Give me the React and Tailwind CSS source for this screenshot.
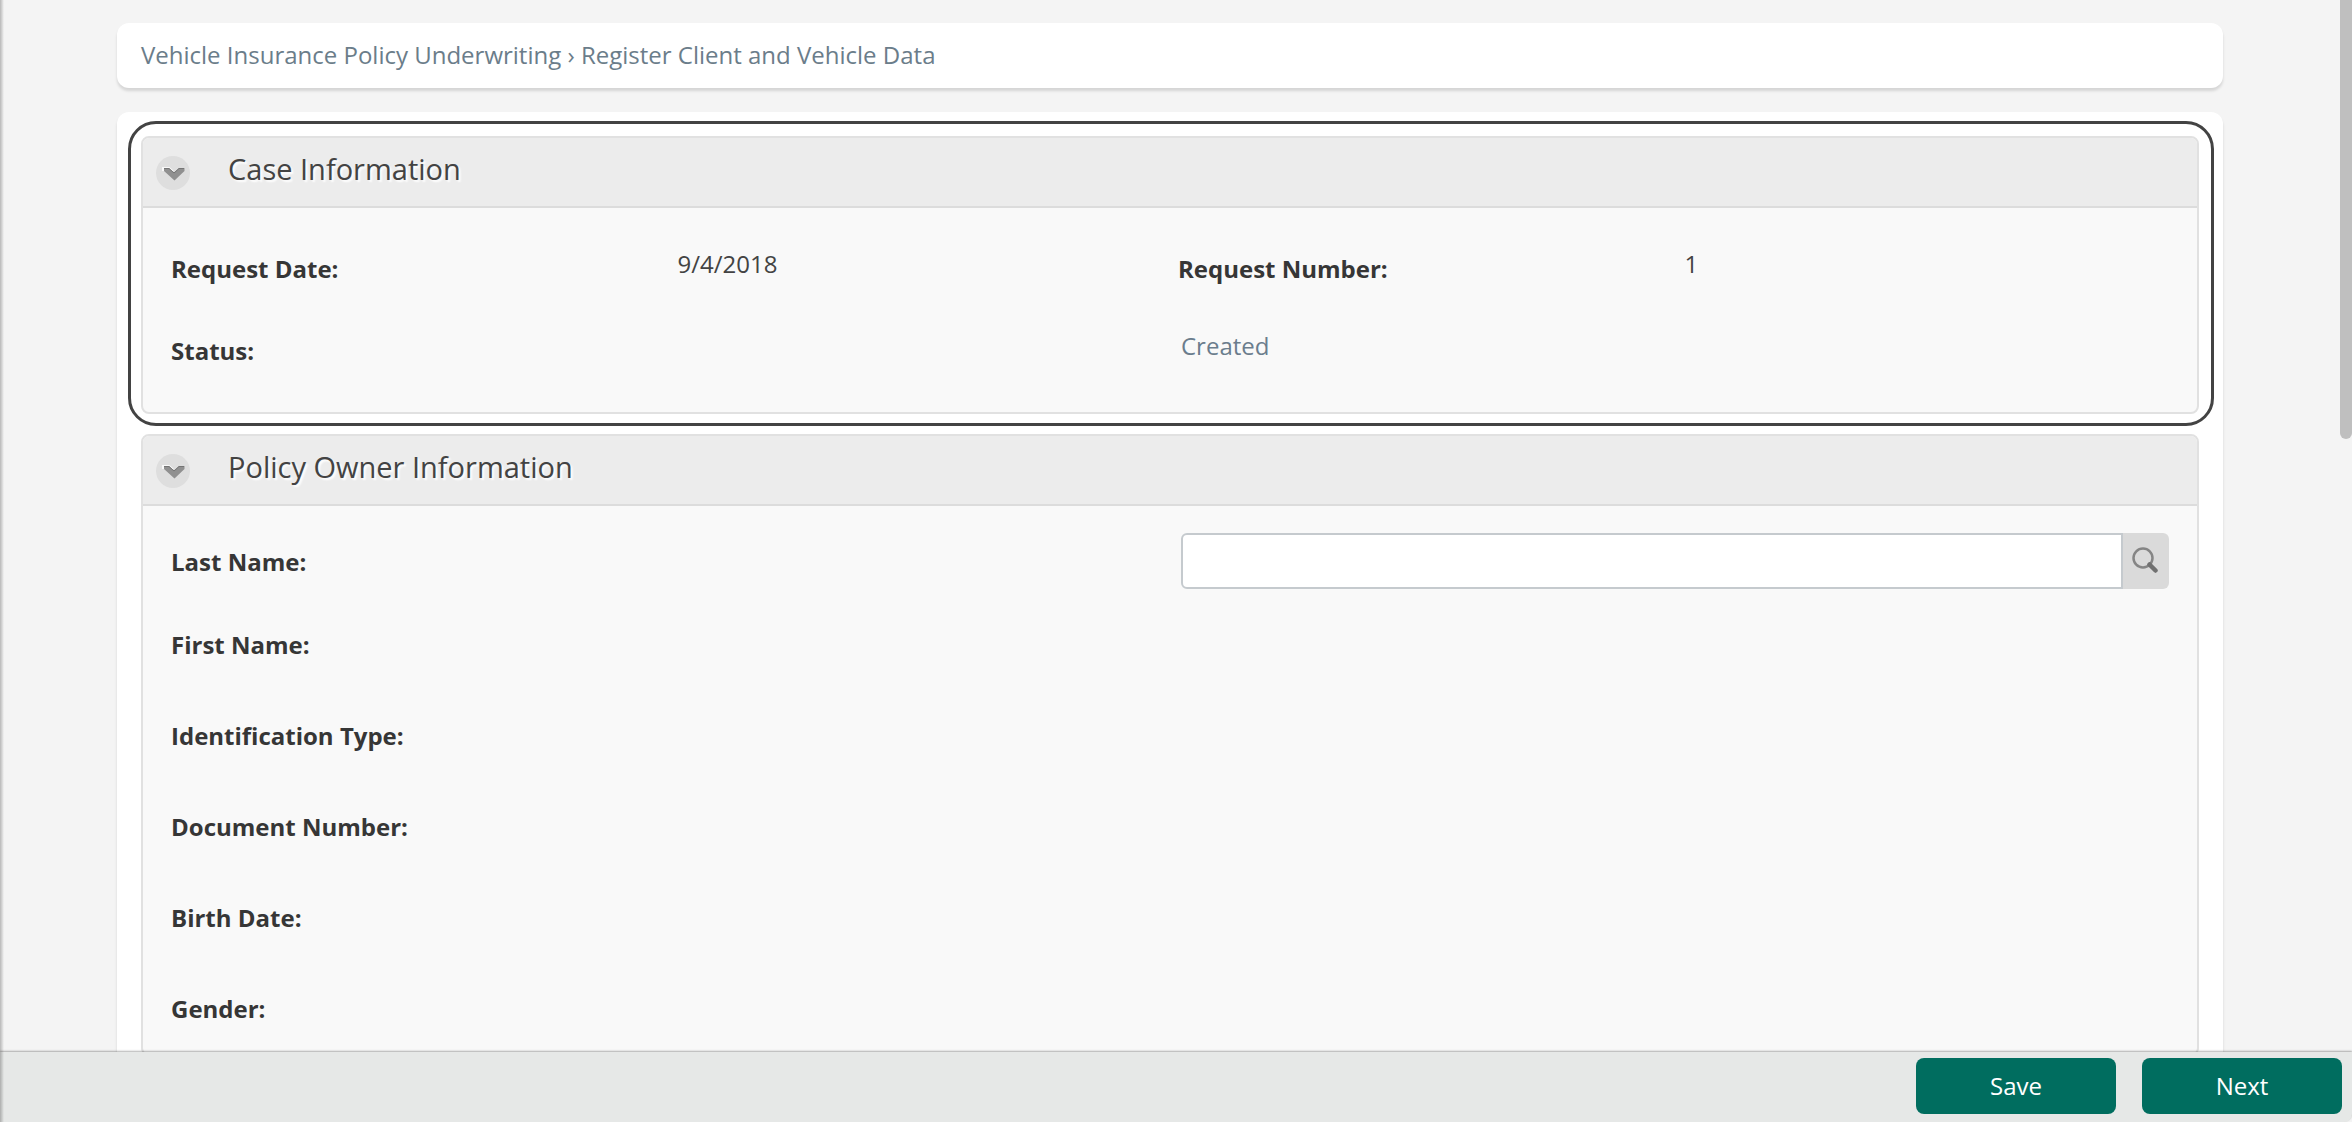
import React, { useState } from 'react';

const ownerFields = ['First Name:', 'Identification Type:', 'Document Number:', 'Birth Date:', 'Gender:'];

function ChevronIcon() {
  return (
    <svg className="w-[34px] h-[34px]" viewBox="0 0 34 34" fill="none">
      <circle cx="17" cy="17" r="17" fill="#dedede" />
      <path d="M7 15V12h6l4 3.500" stroke="#f8f8f8" strokeWidth="2" />
      <path d="M8 12h5l5 4.500L23 12h5.500v3L18.500 24.500 8 15z" fill="#909090" />
      <path d="M8 12.500h5l5 4.500 5-4.500h5" stroke="#757575" strokeWidth="1" />
    </svg>
  );
}

function SearchIcon() {
  return (
    <svg className="w-[26px] h-[28px]" viewBox="0 0 26 28" fill="none">
      <circle cx="11" cy="12" r="9.500" stroke="#858585" strokeWidth="2.500" />
      <path d="M17.500 18.500L23.500 24.500" stroke="#707070" strokeWidth="4.500" strokeLinecap="round" />
    </svg>
  );
}

function Panel({ title, focused, children }) {
  const [open, setOpen] = useState(true);

  return (
    <section className="relative rounded-lg border-2 border-[#e1e1e1] bg-[#f9f9f9]">
      {focused && (
        <div className="absolute -top-[17px] -left-[15px] -right-[17px] -bottom-[14px] rounded-[28px] border-[3px] border-[#434343] pointer-events-none" />
      )}
      <header className="flex items-start gap-[38px] h-[70px] pl-[13px] border-b-2 border-[#dcdcdc] bg-[#ececec] rounded-t-md">
        <button
          type="button"
          className="mt-[18px]"
          aria-label={`Toggle ${title}`}
          aria-expanded={open}
          onClick={() => setOpen(!open)}
        >
          <ChevronIcon />
        </button>
        <h2 className="pt-[11px] text-[29px] leading-10 text-[#434343] [text-shadow:2px_2px_2px_#fff]">{title}</h2>
      </header>
      {open && children}
    </section>
  );
}

export default function App() {
  const [lastName, setLastName] = useState('');

  return (
    <div className="relative flex flex-col h-screen overflow-hidden bg-[#f4f4f4] font-['Open_Sans',sans-serif] text-[24px] leading-8 text-[#434343]">
      <div className="flex flex-1 min-h-0">
        <main className="flex-1 min-w-0 overflow-hidden pt-[23px]">
          <div className="w-[90%] mx-auto">
            <nav className="px-6 pt-4 pb-[17px] rounded-xl bg-white text-[#6b7d8a] shadow-[0_3px_3px_rgba(0,0,0,0.13)]">
              Vehicle Insurance Policy Underwriting › Register Client and Vehicle Data
            </nav>

            <div className="flex flex-col gap-5 mt-6 p-6 rounded-xl bg-white shadow-[0_3px_3px_rgba(0,0,0,0.13)]">
              <Panel title="Case Information" focused>
                <dl className="grid grid-cols-4 auto-rows-[82px] pt-10 pl-7 pr-3">
                  <dt className="pt-[5px] font-bold text-[#363636]">Request Date:</dt>
                  <dd className="pl-[3px]">9/4/2018</dd>
                  <dt className="pt-[5px] font-bold text-[#363636]">Request Number:</dt>
                  <dd className="pl-[3px]">1</dd>
                  <dt className="col-span-2 pt-[5px] font-bold text-[#363636]">Status:</dt>
                  <dd className="col-span-2 pl-[3px] text-[#6b7d8d]">Created</dd>
                </dl>
              </Panel>

              <Panel title="Policy Owner Information">
                <div className="pl-7 pr-3 pt-[27px]">
                  <div className="grid grid-cols-2 items-center pb-[10px]">
                    <label htmlFor="last-name" className="pt-[2px] font-bold text-[#363636]">Last Name:</label>
                    <div className="flex h-14 pl-[3px] pr-4">
                      <input
                        id="last-name"
                        type="text"
                        value={lastName}
                        onChange={(e) => setLastName(e.target.value)}
                        className="flex-1 min-w-0 px-3 border-2 border-[#c5cace] rounded-l-md bg-white outline-none"
                      />
                      <button
                        type="button"
                        aria-label="Search"
                        className="flex items-center justify-center w-[46px] pb-[3px] pr-[2px] rounded-r-md bg-[#dadada]"
                      >
                        <SearchIcon />
                      </button>
                    </div>
                  </div>
                  <dl>
                    {ownerFields.map((name) => (
                      <div key={name} className="grid grid-cols-2 items-center h-[91px]">
                        <dt className="font-bold text-[#363636]">{name}</dt>
                        <dd />
                      </div>
                    ))}
                  </dl>
                </div>
              </Panel>
            </div>
          </div>
        </main>

        {/* Scrollbar thumb */}
        <div className="w-3 h-[439px] rounded-b-full bg-[#bfbfbf]" />
      </div>

      <footer className="relative flex justify-end gap-[26px] pt-[6px] pb-2 pr-[10px] rounded-br-lg bg-[#e6e8e7] shadow-[0_-1px_2px_rgba(0,0,0,0.3)]">
        <button type="button" className="w-[200px] h-14 rounded-lg bg-[#006d5f] text-white">Save</button>
        <button type="button" className="w-[200px] h-14 rounded-lg bg-[#006d5f] text-white">Next</button>
      </footer>

      {/* Shadow cast by the left edge of the window */}
      <div className="absolute inset-y-0 left-0 w-1 bg-linear-to-r from-black/25 to-transparent" />
    </div>
  );
}
